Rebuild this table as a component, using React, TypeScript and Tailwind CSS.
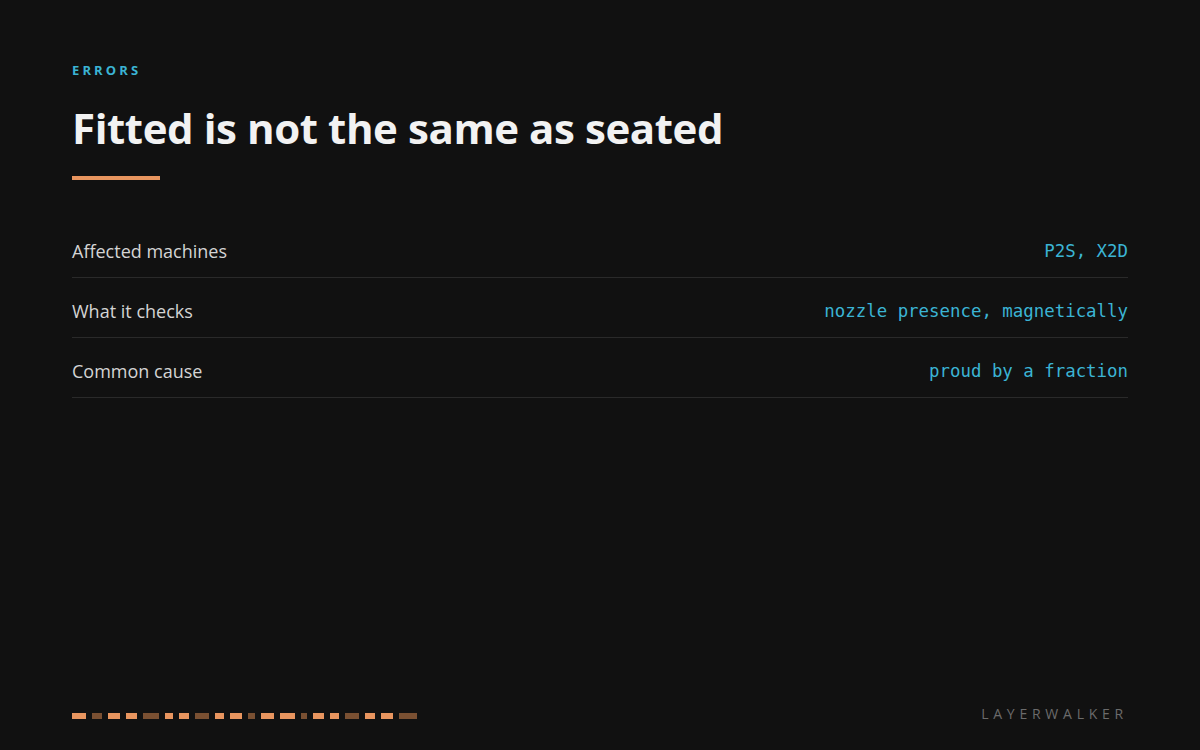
import React from "react";

const rows = [
  { label: "Affected machines", value: "P2S, X2D" },
  { label: "What it checks", value: "nozzle presence, magnetically" },
  { label: "Common cause", value: "proud by a fraction" },
];

// bottom progress strip: [width, dim]
const dashes: [number, boolean][] = [
  [14, false], [10, true], [12, false], [11, false], [16, true],
  [8, false], [10, false], [14, true], [9, false], [12, false],
  [7, true], [13, false], [15, false], [6, true], [11, false],
  [9, false], [14, true], [10, false], [12, false], [18, true],
];

const App: React.FC = () => {
  return (
    <div
      className="w-[1200px] h-[750px] bg-[#111111] flex flex-col px-[72px] pt-[63px] pb-[24px]"
      style={{ fontFamily: '"Open Sans", "Noto Sans", sans-serif' }}
    >
      {/* Header */}
      <div className="text-[13px] leading-[16px] font-bold tracking-[0.24em] text-[#3bb4d4] -translate-y-[1px]">
        ERRORS
      </div>
      <h1 className="mt-[21px] text-[42px] leading-[56px] font-bold text-[#f2f2f2] tracking-[-0.01em]">
        Fitted is not the same as seated
      </h1>
      <div className="mt-[20px] w-[88px] h-[4px] bg-[#e8955f]" />

      {/* Facts */}
      <div className="mt-[38px] flex flex-col">
        {rows.map((row) => (
          <div
            key={row.label}
            className="h-[60px] flex items-center justify-between border-b border-[#2a2a2a] pt-[8px]"
          >
            <span className="text-[18px] text-[#d4d4d4]">{row.label}</span>
            <span
              className="text-[17.4px] text-[#3bb4d4]"
              style={{ fontFamily: '"DejaVu Sans Mono", monospace' }}
            >
              {row.value}
            </span>
          </div>
        ))}
      </div>

      {/* Footer */}
      <div className="mt-auto flex items-center justify-between">
        <div className="flex gap-[6px]">
          {dashes.map(([w, dim], i) => (
            <div
              key={i}
              className={dim ? "h-[6px] bg-[#7a5032]" : "h-[6px] bg-[#e8955f]"}
              style={{ width: w }}
            />
          ))}
        </div>
        <div className="text-[14px] leading-[20px] tracking-[0.34em] text-[#6b6b6b] -translate-y-[2px]">
          LAYERWALKER
        </div>
      </div>
    </div>
  );
};

export default App;
